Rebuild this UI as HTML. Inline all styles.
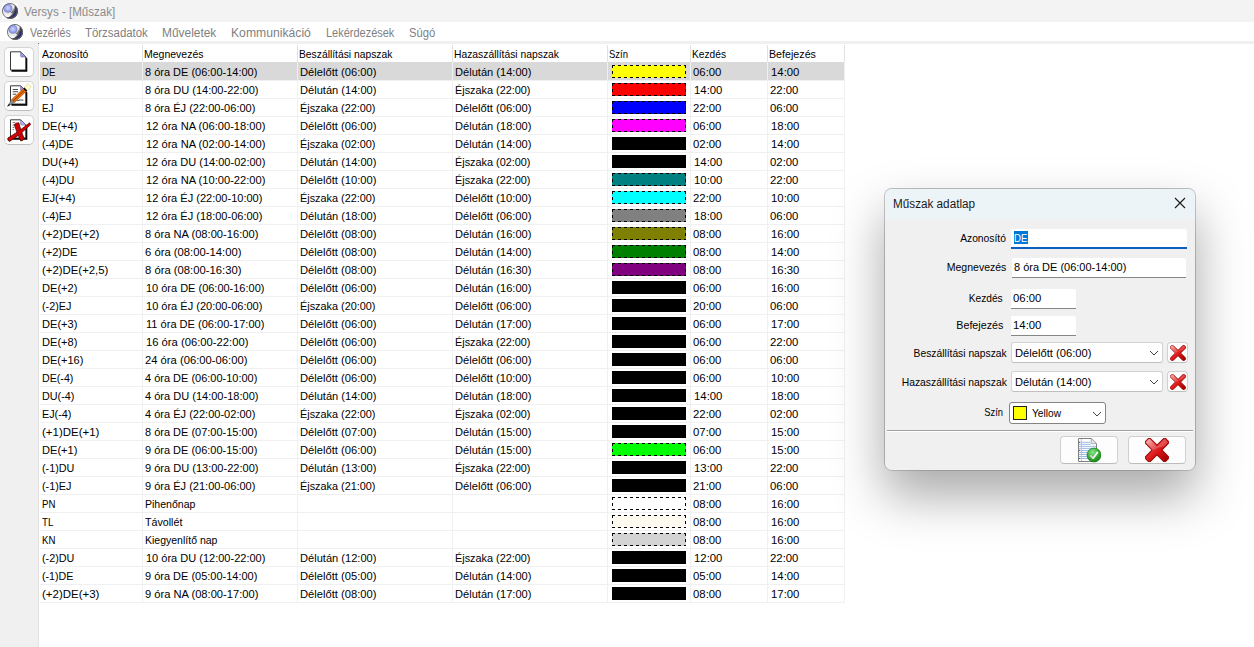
<!DOCTYPE html>
<html><head><meta charset="utf-8"><title>Versys</title>
<style>
*{box-sizing:border-box;margin:0;padding:0}
html,body{width:1254px;height:647px;overflow:hidden;background:#fff}
body{position:relative;font-family:"Liberation Sans",sans-serif;font-size:11px;color:#000}
.abs{position:absolute}
#title{left:0;top:0;width:1254px;height:22px;background:#f3f3f3}
#title .t{position:absolute;left:24px;top:4px;font-size:12px;color:#8b8b8b;white-space:nowrap;line-height:16px}
#menu{left:0;top:22px;width:1254px;height:19px;background:#fff}
#menu span{position:absolute;top:3px;font-size:12px;line-height:16px;color:#7f7f7f;white-space:nowrap}
#band{left:0;top:41px;width:1254px;height:3px;background:#f0f0f0}
#side{left:0;top:43px;width:38px;height:604px;background:#f0f0f0}
#sideline{left:38px;top:44px;width:1px;height:603px;background:#e3e3e3}
.tb{position:absolute;left:4px;width:30px;height:30px;border:1px solid #d4d4d4;border-bottom-color:#bdbdbd;border-radius:5px;background:#fdfdfd}
/* table */
#hdr{left:39px;top:44px;width:806px;height:18px;background:#fff}
#hdr span{position:absolute;top:1px;height:18px;line-height:19px;padding-left:3px;border-right:1px solid #e2e2e2;white-space:nowrap;font-size:11px}
.r{position:absolute;left:39px;width:806px;height:19px;border-bottom:1px solid #f0f0f0}
.r.sel{background:linear-gradient(90deg,#fff 0 1px,#d9d9d9 1px)}
.c{position:absolute;top:1px;height:17px;line-height:18px;white-space:nowrap;font-size:11px}
.c.n{margin-left:.5px}
.c0{left:3px}.c1{left:106px}.c2{left:260.5px}.c3{left:415.5px}.c5{left:654px}.c6{left:731.3px}
.sw{position:absolute;left:573px;top:3px;width:74px;height:13px}
.sw.d{background-image:
 repeating-linear-gradient(90deg,#000 0 3px,transparent 3px 6px),
 repeating-linear-gradient(90deg,#000 0 3px,transparent 3px 6px),
 repeating-linear-gradient(180deg,#000 0 3px,transparent 3px 6px),
 repeating-linear-gradient(180deg,#000 0 3px,transparent 3px 6px);
 background-size:100% 1px,100% 1px,1px 100%,1px 100%;
 background-position:0 0,0 100%,0 0,100% 0;background-repeat:no-repeat}
.vl{position:absolute;top:62px;width:1px;height:541px;background:#f0f0f0}
/* dialog */
#dlg{left:884px;top:188px;width:312px;height:283px;border-radius:8px;background:#f0f0f0;background-clip:padding-box;border:1px solid rgba(0,0,0,.2);border-top-color:rgba(0,0,0,.25);border-bottom-color:rgba(0,0,0,.14);
 box-shadow:0 25px 50px rgba(0,0,0,.34);overflow:hidden}
#dlg .in{position:absolute;left:0;top:-1px;width:310px;height:283px}
#dlg .cap{position:absolute;left:0;top:0;width:310px;height:31px;background:#ecf4f8}
#dlg .cap span{position:absolute;left:8px;top:8px;font-size:12px;line-height:16px;color:#1a1a1a;white-space:nowrap}
.lbl{position:absolute;text-align:right;white-space:nowrap;font-size:11px;line-height:14px}
.inp{position:absolute;background:#fff;border-bottom:1px solid #868686;border-radius:2px 2px 0 0;font-size:11px;line-height:14px;white-space:nowrap}
.inp span{position:absolute;left:1.5px;top:2px}
.inp span.n1{left:1.5px}
.inp.foc span{left:3px}
.cmb{position:absolute;background:#fff;border:1px solid #d2d2d2;border-bottom-color:#c0c0c0;border-radius:3px;font-size:11px;line-height:14px;white-space:nowrap}
.cmb span{position:absolute;left:2.5px;top:3px}
.xb{position:absolute;width:21px;height:21px;border:1px solid #d0d0d0;border-bottom-color:#bdbdbd;border-radius:4px;background:#fdfdfd}
.btn{position:absolute;width:58px;height:28px;border:1px solid #d0d0d0;border-bottom-color:#bdbdbd;border-radius:4px;background:#fdfdfd}

.inp.foc{border-bottom:2px solid #0a5fc0}
.hl{position:absolute;left:3px;top:2px;width:14px;height:13px;background:#0078d7}
.scmb{position:absolute;background:#fff;border:1px solid #848484;border-radius:3px;font-size:11px;line-height:14px;white-space:nowrap}
.scmb span{position:absolute;left:22px;top:3px}
.ybox{position:absolute;left:3px;top:3px;width:14px;height:14px;background:#ffff00;border:1px solid #222}
.s{display:inline-block;white-space:nowrap}
#menu span.s,#hdr span.s,#dlg .cap span.s,.cmb span.s,.inp span.s,.scmb span.s{position:static;border:0;padding:0;height:auto;line-height:inherit}
</style></head><body>
<div id="title" class="abs"><i class="abs" style="left:2px;top:3px;width:16px;height:16px;background:#fdfdfd"></i><svg class="abs" style="left:2px;top:3px" width="16" height="16" viewBox="0 0 16 16"><use href="#sph"/></svg><span class="t"><span class="s" style="transform:scaleX(0.963);transform-origin:0 0">Versys - [Műszak]</span></span></div>
<div id="menu" class="abs"><svg class="abs" style="left:7px;top:2px" width="16" height="16" viewBox="0 0 16 16"><use href="#sph"/></svg>
<span style="left:30px"><span class="s" style="transform:scaleX(0.884);transform-origin:0 0">Vezérlés</span></span><span style="left:85px"><span class="s" style="transform:scaleX(0.951);transform-origin:0 0">Törzsadatok</span></span><span style="left:162px"><span class="s" style="transform:scaleX(0.993);transform-origin:0 0">Műveletek</span></span><span style="left:231px"><span class="s" style="transform:scaleX(1.015);transform-origin:0 0">Kommunikáció</span></span><span style="left:326px"><span class="s" style="transform:scaleX(0.915);transform-origin:0 0">Lekérdezések</span></span><span style="left:409px"><span class="s" style="transform:scaleX(0.935);transform-origin:0 0">Súgó</span></span>
</div>
<div id="band" class="abs"></div>
<div id="side" class="abs"></div>
<div id="sideline" class="abs"></div><i class="abs" style="left:38px;top:43px;width:1px;height:1px;background:#777"></i>
<div class="tb" style="top:47px"></div>
<div class="tb" style="top:81px"></div>
<div class="tb" style="top:115px"></div>
<svg class="abs" style="left:0;top:44px" width="38" height="106" viewBox="0 44 38 106">
 <!-- new -->
 <g id="pg"><path d="M11.5 53 H21.5 L27.3 58.6 V71.7 H11.5Z" fill="#000"/><path d="M10.5 51.8 H20.6 L25.8 57 V70 H10.5Z" fill="#fefefe" stroke="#222" stroke-width=".9"/><path d="M20.6 51.8 L25.8 57 H21.6 Q20.6 57 20.6 56Z" fill="#9c9ce8" stroke="#55558a" stroke-width=".5"/></g>
 <!-- edit -->
 <g transform="translate(0,34)"><path d="M11.5 53 H21.5 L27.3 58.6 V71.7 H11.5Z" fill="#000"/><path d="M10.5 51.8 H20.6 L25.8 57 V70 H10.5Z" fill="#fefefe" stroke="#222" stroke-width=".9"/><path d="M20.6 51.8 L25.8 57 H21.6 Q20.6 57 20.6 56Z" fill="#9c9ce8" stroke="#55558a" stroke-width=".5"/>
  <path d="M12.8 55.5H18 M12.8 57.7H18 M12.8 60.2H16 M17 66.8 Q20 65.4 23.4 66.2" stroke="#333" stroke-width=".9" fill="none"/></g>
 <g>
  <path d="M7.5 106.3 L11.93 99.35 L14.69 102.25 Z" fill="#8e8e8e" stroke="#555" stroke-width=".5"/>
  <path d="M7.3 106.6 L9 103.9 L10.1 105.1Z" fill="#000"/>
  <path d="M11.93 99.35 L23.4 88.48 L26.16 91.38 L14.69 102.25Z" fill="#f07000" stroke="#8a3000" stroke-width=".5"/>
  <path d="M13.3 100.8 L24.78 89.93" stroke="#6a2000" stroke-width=".8"/>
  <path d="M23.4 88.48 L24.56 87.37 L27.32 90.27 L26.16 91.38Z" fill="#000"/>
  <path d="M24.29 87.08 L28.07 83.51 L31.37 86.99 L27.59 90.56Z" fill="#ffffc4" stroke="#c4c49a" stroke-width=".5"/>
 </g>
 <!-- delete -->
 <g transform="translate(0,68)"><path d="M11.5 53 H21.5 L27.3 58.6 V71.7 H11.5Z" fill="#000"/><path d="M10.5 51.8 H20.6 L25.8 57 V70 H10.5Z" fill="#fefefe" stroke="#222" stroke-width=".9"/><path d="M20.6 51.8 L25.8 57 H21.6 Q20.6 57 20.6 56Z" fill="#b4b4f0" stroke="#55558a" stroke-width=".5"/>
  <path d="M12.6 54.6H15.4 M12.6 57H15 M12.6 59.4H14.4 M12.6 61.6H14" stroke="#555" stroke-width=".8" fill="none"/></g>
 <g>
  <path d="M7.8 138 Q18 132.4 29.6 122.8 L30.6 124.6 Q20.4 135 9.6 141.4 Q7.2 140.8 7.8 138Z" fill="#c80000" stroke="#4a0000" stroke-width=".7"/>
  <path d="M14.3 124.6 Q16.4 122.4 18.8 122.8 Q20.6 130.6 24.2 138.4 Q23.2 141 20.8 141 Q16.6 132.8 14.3 124.6Z" fill="#cc0000" stroke="#4a0000" stroke-width=".7"/>
  <path d="M9 139.6 Q18.6 134 29.8 123.8" stroke="#d80000" stroke-width="1.4" fill="none"/>
 </g>
</svg>
<div id="hdr" class="abs">
<span style="left:0;width:104px"><span class="s" style="transform:scaleX(0.948);transform-origin:0 0">Azonosító</span></span><span style="left:104px;width:155px;padding-left:1.4px"><span class="s" style="transform:scaleX(0.954);transform-origin:0 0">Megnevezés</span></span><span style="left:259px;width:155px;padding-left:1.4px"><span class="s" style="transform:scaleX(0.937);transform-origin:0 0">Beszállítási napszak</span></span><span style="left:414px;width:155px;padding-left:1.4px"><span class="s" style="transform:scaleX(0.938);transform-origin:0 0">Hazaszállítási napszak</span></span><span style="left:569px;width:83px;padding-left:1.4px"><span class="s" style="transform:scaleX(0.859);transform-origin:0 0">Szín</span></span><span style="left:652px;width:77px;padding-left:1.4px"><span class="s" style="transform:scaleX(0.927);transform-origin:0 0">Kezdés</span></span><span style="left:729px;width:77px;padding-left:1.4px"><span class="s" style="transform:scaleX(0.971);transform-origin:0 0">Befejezés</span></span>
</div>
<div class="r sel" style="top:62px"><span class="c c0"><span class="s" style="transform:scaleX(0.877);transform-origin:0 0">DE</span></span><span class="c c1"><span class="s" style="transform:scaleX(0.999);transform-origin:0 0">8 óra DE (06:00-14:00)</span></span><span class="c c2"><span class="s" style="transform:scaleX(1.016);transform-origin:0 0">Délelőtt (06:00)</span></span><span class="c c3"><span class="s" style="transform:scaleX(1.008);transform-origin:0 0">Délután (14:00)</span></span><i class="sw d" style="background-color:#ffff00"></i><span class="c c5"><span class="s" style="transform:scaleX(1.032);transform-origin:0 0">06:00</span></span><span class="c c6 n"><span class="s" style="transform:scaleX(1.032);transform-origin:0 0">14:00</span></span></div>
<div class="r" style="top:80px"><span class="c c0"><span class="s" style="transform:scaleX(0.906);transform-origin:0 0">DU</span></span><span class="c c1"><span class="s" style="transform:scaleX(1.003);transform-origin:0 0">8 óra DU (14:00-22:00)</span></span><span class="c c2"><span class="s" style="transform:scaleX(1.008);transform-origin:0 0">Délután (14:00)</span></span><span class="c c3"><span class="s" style="transform:scaleX(0.987);transform-origin:0 0">Éjszaka (22:00)</span></span><i class="sw d" style="background-color:#ff0000"></i><span class="c c5 n"><span class="s" style="transform:scaleX(1.032);transform-origin:0 0">14:00</span></span><span class="c c6"><span class="s" style="transform:scaleX(1.032);transform-origin:0 0">22:00</span></span></div>
<div class="r" style="top:98px"><span class="c c0"><span class="s" style="transform:scaleX(0.888);transform-origin:0 0">EJ</span></span><span class="c c1"><span class="s" style="transform:scaleX(1.003);transform-origin:0 0">8 óra ÉJ (22:00-06:00)</span></span><span class="c c2"><span class="s" style="transform:scaleX(0.987);transform-origin:0 0">Éjszaka (22:00)</span></span><span class="c c3"><span class="s" style="transform:scaleX(1.016);transform-origin:0 0">Délelőtt (06:00)</span></span><i class="sw d" style="background-color:#0000ff"></i><span class="c c5"><span class="s" style="transform:scaleX(1.032);transform-origin:0 0">22:00</span></span><span class="c c6"><span class="s" style="transform:scaleX(1.032);transform-origin:0 0">06:00</span></span></div>
<div class="r" style="top:116px"><span class="c c0"><span class="s" style="transform:scaleX(1.007);transform-origin:0 0">DE(+4)</span></span><span class="c c1 n"><span class="s" style="transform:scaleX(1.012);transform-origin:0 0">12 óra NA (06:00-18:00)</span></span><span class="c c2"><span class="s" style="transform:scaleX(1.016);transform-origin:0 0">Délelőtt (06:00)</span></span><span class="c c3"><span class="s" style="transform:scaleX(1.008);transform-origin:0 0">Délután (18:00)</span></span><i class="sw d" style="background-color:#ff00ff"></i><span class="c c5"><span class="s" style="transform:scaleX(1.032);transform-origin:0 0">06:00</span></span><span class="c c6 n"><span class="s" style="transform:scaleX(1.032);transform-origin:0 0">18:00</span></span></div>
<div class="r" style="top:134px"><span class="c c0"><span class="s" style="transform:scaleX(0.969);transform-origin:0 0">(-4)DE</span></span><span class="c c1 n"><span class="s" style="transform:scaleX(1.012);transform-origin:0 0">12 óra NA (02:00-14:00)</span></span><span class="c c2"><span class="s" style="transform:scaleX(0.987);transform-origin:0 0">Éjszaka (02:00)</span></span><span class="c c3"><span class="s" style="transform:scaleX(1.008);transform-origin:0 0">Délután (14:00)</span></span><i class="sw" style="background-color:#000000"></i><span class="c c5"><span class="s" style="transform:scaleX(1.032);transform-origin:0 0">02:00</span></span><span class="c c6 n"><span class="s" style="transform:scaleX(1.032);transform-origin:0 0">14:00</span></span></div>
<div class="r" style="top:152px"><span class="c c0"><span class="s" style="transform:scaleX(1.018);transform-origin:0 0">DU(+4)</span></span><span class="c c1 n"><span class="s" style="transform:scaleX(1.001);transform-origin:0 0">12 óra DU (14:00-02:00)</span></span><span class="c c2"><span class="s" style="transform:scaleX(1.008);transform-origin:0 0">Délután (14:00)</span></span><span class="c c3"><span class="s" style="transform:scaleX(0.987);transform-origin:0 0">Éjszaka (02:00)</span></span><i class="sw" style="background-color:#000000"></i><span class="c c5 n"><span class="s" style="transform:scaleX(1.032);transform-origin:0 0">14:00</span></span><span class="c c6"><span class="s" style="transform:scaleX(1.032);transform-origin:0 0">02:00</span></span></div>
<div class="r" style="top:170px"><span class="c c0"><span class="s" style="transform:scaleX(0.982);transform-origin:0 0">(-4)DU</span></span><span class="c c1 n"><span class="s" style="transform:scaleX(1.012);transform-origin:0 0">12 óra NA (10:00-22:00)</span></span><span class="c c2"><span class="s" style="transform:scaleX(1.016);transform-origin:0 0">Délelőtt (10:00)</span></span><span class="c c3"><span class="s" style="transform:scaleX(0.987);transform-origin:0 0">Éjszaka (22:00)</span></span><i class="sw d" style="background-color:#008080"></i><span class="c c5 n"><span class="s" style="transform:scaleX(1.032);transform-origin:0 0">10:00</span></span><span class="c c6"><span class="s" style="transform:scaleX(1.032);transform-origin:0 0">22:00</span></span></div>
<div class="r" style="top:188px"><span class="c c0"><span class="s" style="transform:scaleX(1.021);transform-origin:0 0">EJ(+4)</span></span><span class="c c1 n"><span class="s" style="transform:scaleX(1.002);transform-origin:0 0">12 óra ÉJ (22:00-10:00)</span></span><span class="c c2"><span class="s" style="transform:scaleX(0.987);transform-origin:0 0">Éjszaka (22:00)</span></span><span class="c c3"><span class="s" style="transform:scaleX(1.016);transform-origin:0 0">Délelőtt (10:00)</span></span><i class="sw d" style="background-color:#00ffff"></i><span class="c c5"><span class="s" style="transform:scaleX(1.032);transform-origin:0 0">22:00</span></span><span class="c c6 n"><span class="s" style="transform:scaleX(1.032);transform-origin:0 0">10:00</span></span></div>
<div class="r" style="top:206px"><span class="c c0"><span class="s" style="transform:scaleX(0.982);transform-origin:0 0">(-4)EJ</span></span><span class="c c1 n"><span class="s" style="transform:scaleX(1.002);transform-origin:0 0">12 óra ÉJ (18:00-06:00)</span></span><span class="c c2"><span class="s" style="transform:scaleX(1.008);transform-origin:0 0">Délután (18:00)</span></span><span class="c c3"><span class="s" style="transform:scaleX(1.016);transform-origin:0 0">Délelőtt (06:00)</span></span><i class="sw d" style="background-color:#808080"></i><span class="c c5 n"><span class="s" style="transform:scaleX(1.032);transform-origin:0 0">18:00</span></span><span class="c c6"><span class="s" style="transform:scaleX(1.032);transform-origin:0 0">06:00</span></span></div>
<div class="r" style="top:224px"><span class="c c0"><span class="s" style="transform:scaleX(1.043);transform-origin:0 0">(+2)DE(+2)</span></span><span class="c c1"><span class="s" style="transform:scaleX(1.013);transform-origin:0 0">8 óra NA (08:00-16:00)</span></span><span class="c c2"><span class="s" style="transform:scaleX(1.016);transform-origin:0 0">Délelőtt (08:00)</span></span><span class="c c3"><span class="s" style="transform:scaleX(1.008);transform-origin:0 0">Délután (16:00)</span></span><i class="sw d" style="background-color:#808000"></i><span class="c c5"><span class="s" style="transform:scaleX(1.032);transform-origin:0 0">08:00</span></span><span class="c c6 n"><span class="s" style="transform:scaleX(1.032);transform-origin:0 0">16:00</span></span></div>
<div class="r" style="top:242px"><span class="c c0"><span class="s" style="transform:scaleX(1.007);transform-origin:0 0">(+2)DE</span></span><span class="c c1"><span class="s" style="transform:scaleX(1.024);transform-origin:0 0">6 óra (08:00-14:00)</span></span><span class="c c2"><span class="s" style="transform:scaleX(1.016);transform-origin:0 0">Délelőtt (08:00)</span></span><span class="c c3"><span class="s" style="transform:scaleX(1.008);transform-origin:0 0">Délután (14:00)</span></span><i class="sw d" style="background-color:#008000"></i><span class="c c5"><span class="s" style="transform:scaleX(1.032);transform-origin:0 0">08:00</span></span><span class="c c6 n"><span class="s" style="transform:scaleX(1.032);transform-origin:0 0">14:00</span></span></div>
<div class="r" style="top:260px"><span class="c c0"><span class="s" style="transform:scaleX(1.034);transform-origin:0 0">(+2)DE(+2,5)</span></span><span class="c c1"><span class="s" style="transform:scaleX(1.024);transform-origin:0 0">8 óra (08:00-16:30)</span></span><span class="c c2"><span class="s" style="transform:scaleX(1.016);transform-origin:0 0">Délelőtt (08:00)</span></span><span class="c c3"><span class="s" style="transform:scaleX(1.008);transform-origin:0 0">Délután (16:30)</span></span><i class="sw d" style="background-color:#800080"></i><span class="c c5"><span class="s" style="transform:scaleX(1.032);transform-origin:0 0">08:00</span></span><span class="c c6 n"><span class="s" style="transform:scaleX(1.032);transform-origin:0 0">16:30</span></span></div>
<div class="r" style="top:278px"><span class="c c0"><span class="s" style="transform:scaleX(1.007);transform-origin:0 0">DE(+2)</span></span><span class="c c1 n"><span class="s" style="transform:scaleX(0.998);transform-origin:0 0">10 óra DE (06:00-16:00)</span></span><span class="c c2"><span class="s" style="transform:scaleX(1.016);transform-origin:0 0">Délelőtt (06:00)</span></span><span class="c c3"><span class="s" style="transform:scaleX(1.008);transform-origin:0 0">Délután (16:00)</span></span><i class="sw" style="background-color:#000000"></i><span class="c c5"><span class="s" style="transform:scaleX(1.032);transform-origin:0 0">06:00</span></span><span class="c c6 n"><span class="s" style="transform:scaleX(1.032);transform-origin:0 0">16:00</span></span></div>
<div class="r" style="top:296px"><span class="c c0"><span class="s" style="transform:scaleX(0.982);transform-origin:0 0">(-2)EJ</span></span><span class="c c1 n"><span class="s" style="transform:scaleX(1.002);transform-origin:0 0">10 óra ÉJ (20:00-06:00)</span></span><span class="c c2"><span class="s" style="transform:scaleX(0.987);transform-origin:0 0">Éjszaka (20:00)</span></span><span class="c c3"><span class="s" style="transform:scaleX(1.016);transform-origin:0 0">Délelőtt (06:00)</span></span><i class="sw" style="background-color:#000000"></i><span class="c c5"><span class="s" style="transform:scaleX(1.032);transform-origin:0 0">20:00</span></span><span class="c c6"><span class="s" style="transform:scaleX(1.032);transform-origin:0 0">06:00</span></span></div>
<div class="r" style="top:314px"><span class="c c0"><span class="s" style="transform:scaleX(1.007);transform-origin:0 0">DE(+3)</span></span><span class="c c1 n"><span class="s" style="transform:scaleX(1.005);transform-origin:0 0">11 óra DE (06:00-17:00)</span></span><span class="c c2"><span class="s" style="transform:scaleX(1.016);transform-origin:0 0">Délelőtt (06:00)</span></span><span class="c c3"><span class="s" style="transform:scaleX(1.008);transform-origin:0 0">Délután (17:00)</span></span><i class="sw" style="background-color:#000000"></i><span class="c c5"><span class="s" style="transform:scaleX(1.032);transform-origin:0 0">06:00</span></span><span class="c c6 n"><span class="s" style="transform:scaleX(1.032);transform-origin:0 0">17:00</span></span></div>
<div class="r" style="top:332px"><span class="c c0"><span class="s" style="transform:scaleX(1.007);transform-origin:0 0">DE(+8)</span></span><span class="c c1 n"><span class="s" style="transform:scaleX(1.021);transform-origin:0 0">16 óra (06:00-22:00)</span></span><span class="c c2"><span class="s" style="transform:scaleX(1.016);transform-origin:0 0">Délelőtt (06:00)</span></span><span class="c c3"><span class="s" style="transform:scaleX(0.987);transform-origin:0 0">Éjszaka (22:00)</span></span><i class="sw" style="background-color:#000000"></i><span class="c c5"><span class="s" style="transform:scaleX(1.032);transform-origin:0 0">06:00</span></span><span class="c c6"><span class="s" style="transform:scaleX(1.032);transform-origin:0 0">22:00</span></span></div>
<div class="r" style="top:350px"><span class="c c0"><span class="s" style="transform:scaleX(1.003);transform-origin:0 0">DE(+16)</span></span><span class="c c1"><span class="s" style="transform:scaleX(1.021);transform-origin:0 0">24 óra (06:00-06:00)</span></span><span class="c c2"><span class="s" style="transform:scaleX(1.016);transform-origin:0 0">Délelőtt (06:00)</span></span><span class="c c3"><span class="s" style="transform:scaleX(1.016);transform-origin:0 0">Délelőtt (06:00)</span></span><i class="sw" style="background-color:#000000"></i><span class="c c5"><span class="s" style="transform:scaleX(1.032);transform-origin:0 0">06:00</span></span><span class="c c6"><span class="s" style="transform:scaleX(1.032);transform-origin:0 0">06:00</span></span></div>
<div class="r" style="top:368px"><span class="c c0"><span class="s" style="transform:scaleX(0.969);transform-origin:0 0">DE(-4)</span></span><span class="c c1"><span class="s" style="transform:scaleX(0.999);transform-origin:0 0">4 óra DE (06:00-10:00)</span></span><span class="c c2"><span class="s" style="transform:scaleX(1.016);transform-origin:0 0">Délelőtt (06:00)</span></span><span class="c c3"><span class="s" style="transform:scaleX(1.016);transform-origin:0 0">Délelőtt (10:00)</span></span><i class="sw" style="background-color:#000000"></i><span class="c c5"><span class="s" style="transform:scaleX(1.032);transform-origin:0 0">06:00</span></span><span class="c c6 n"><span class="s" style="transform:scaleX(1.032);transform-origin:0 0">10:00</span></span></div>
<div class="r" style="top:386px"><span class="c c0"><span class="s" style="transform:scaleX(0.982);transform-origin:0 0">DU(-4)</span></span><span class="c c1"><span class="s" style="transform:scaleX(1.003);transform-origin:0 0">4 óra DU (14:00-18:00)</span></span><span class="c c2"><span class="s" style="transform:scaleX(1.008);transform-origin:0 0">Délután (14:00)</span></span><span class="c c3"><span class="s" style="transform:scaleX(1.008);transform-origin:0 0">Délután (18:00)</span></span><i class="sw" style="background-color:#000000"></i><span class="c c5 n"><span class="s" style="transform:scaleX(1.032);transform-origin:0 0">14:00</span></span><span class="c c6 n"><span class="s" style="transform:scaleX(1.032);transform-origin:0 0">18:00</span></span></div>
<div class="r" style="top:404px"><span class="c c0"><span class="s" style="transform:scaleX(0.982);transform-origin:0 0">EJ(-4)</span></span><span class="c c1"><span class="s" style="transform:scaleX(1.003);transform-origin:0 0">4 óra ÉJ (22:00-02:00)</span></span><span class="c c2"><span class="s" style="transform:scaleX(0.987);transform-origin:0 0">Éjszaka (22:00)</span></span><span class="c c3"><span class="s" style="transform:scaleX(0.987);transform-origin:0 0">Éjszaka (02:00)</span></span><i class="sw" style="background-color:#000000"></i><span class="c c5"><span class="s" style="transform:scaleX(1.032);transform-origin:0 0">22:00</span></span><span class="c c6"><span class="s" style="transform:scaleX(1.032);transform-origin:0 0">02:00</span></span></div>
<div class="r" style="top:422px"><span class="c c0"><span class="s" style="transform:scaleX(1.043);transform-origin:0 0">(+1)DE(+1)</span></span><span class="c c1"><span class="s" style="transform:scaleX(0.999);transform-origin:0 0">8 óra DE (07:00-15:00)</span></span><span class="c c2"><span class="s" style="transform:scaleX(1.016);transform-origin:0 0">Délelőtt (07:00)</span></span><span class="c c3"><span class="s" style="transform:scaleX(1.008);transform-origin:0 0">Délután (15:00)</span></span><i class="sw" style="background-color:#000000"></i><span class="c c5"><span class="s" style="transform:scaleX(1.032);transform-origin:0 0">07:00</span></span><span class="c c6 n"><span class="s" style="transform:scaleX(1.032);transform-origin:0 0">15:00</span></span></div>
<div class="r" style="top:440px"><span class="c c0"><span class="s" style="transform:scaleX(1.007);transform-origin:0 0">DE(+1)</span></span><span class="c c1"><span class="s" style="transform:scaleX(0.999);transform-origin:0 0">9 óra DE (06:00-15:00)</span></span><span class="c c2"><span class="s" style="transform:scaleX(1.016);transform-origin:0 0">Délelőtt (06:00)</span></span><span class="c c3"><span class="s" style="transform:scaleX(1.008);transform-origin:0 0">Délután (15:00)</span></span><i class="sw d" style="background-color:#00ff00"></i><span class="c c5"><span class="s" style="transform:scaleX(1.032);transform-origin:0 0">06:00</span></span><span class="c c6 n"><span class="s" style="transform:scaleX(1.032);transform-origin:0 0">15:00</span></span></div>
<div class="r" style="top:458px"><span class="c c0"><span class="s" style="transform:scaleX(0.982);transform-origin:0 0">(-1)DU</span></span><span class="c c1"><span class="s" style="transform:scaleX(1.003);transform-origin:0 0">9 óra DU (13:00-22:00)</span></span><span class="c c2"><span class="s" style="transform:scaleX(1.008);transform-origin:0 0">Délután (13:00)</span></span><span class="c c3"><span class="s" style="transform:scaleX(0.987);transform-origin:0 0">Éjszaka (22:00)</span></span><i class="sw" style="background-color:#000000"></i><span class="c c5 n"><span class="s" style="transform:scaleX(1.032);transform-origin:0 0">13:00</span></span><span class="c c6"><span class="s" style="transform:scaleX(1.032);transform-origin:0 0">22:00</span></span></div>
<div class="r" style="top:476px"><span class="c c0"><span class="s" style="transform:scaleX(0.982);transform-origin:0 0">(-1)EJ</span></span><span class="c c1"><span class="s" style="transform:scaleX(1.003);transform-origin:0 0">9 óra ÉJ (21:00-06:00)</span></span><span class="c c2"><span class="s" style="transform:scaleX(0.987);transform-origin:0 0">Éjszaka (21:00)</span></span><span class="c c3"><span class="s" style="transform:scaleX(1.016);transform-origin:0 0">Délelőtt (06:00)</span></span><i class="sw" style="background-color:#000000"></i><span class="c c5"><span class="s" style="transform:scaleX(1.032);transform-origin:0 0">21:00</span></span><span class="c c6"><span class="s" style="transform:scaleX(1.032);transform-origin:0 0">06:00</span></span></div>
<div class="r" style="top:494px"><span class="c c0"><span class="s" style="transform:scaleX(0.877);transform-origin:0 0">PN</span></span><span class="c c1"><span class="s" style="transform:scaleX(0.958);transform-origin:0 0">Pihenőnap</span></span><span class="c c2"></span><span class="c c3"></span><i class="sw d" style="background-color:#ffffff"></i><span class="c c5"><span class="s" style="transform:scaleX(1.032);transform-origin:0 0">08:00</span></span><span class="c c6 n"><span class="s" style="transform:scaleX(1.032);transform-origin:0 0">16:00</span></span></div>
<div class="r" style="top:512px"><span class="c c0"><span class="s" style="transform:scaleX(0.888);transform-origin:0 0">TL</span></span><span class="c c1"><span class="s" style="transform:scaleX(0.971);transform-origin:0 0">Távollét</span></span><span class="c c2"></span><span class="c c3"></span><i class="sw d" style="background-color:#fffaf0"></i><span class="c c5"><span class="s" style="transform:scaleX(1.032);transform-origin:0 0">08:00</span></span><span class="c c6 n"><span class="s" style="transform:scaleX(1.032);transform-origin:0 0">16:00</span></span></div>
<div class="r" style="top:530px"><span class="c c0"><span class="s" style="transform:scaleX(0.877);transform-origin:0 0">KN</span></span><span class="c c1"><span class="s" style="transform:scaleX(0.955);transform-origin:0 0">Kiegyenlítő nap</span></span><span class="c c2"></span><span class="c c3"></span><i class="sw d" style="background-color:#d3d3d3"></i><span class="c c5"><span class="s" style="transform:scaleX(1.032);transform-origin:0 0">08:00</span></span><span class="c c6 n"><span class="s" style="transform:scaleX(1.032);transform-origin:0 0">16:00</span></span></div>
<div class="r" style="top:548px"><span class="c c0"><span class="s" style="transform:scaleX(0.982);transform-origin:0 0">(-2)DU</span></span><span class="c c1 n"><span class="s" style="transform:scaleX(1.001);transform-origin:0 0">10 óra DU (12:00-22:00)</span></span><span class="c c2"><span class="s" style="transform:scaleX(1.008);transform-origin:0 0">Délután (12:00)</span></span><span class="c c3"><span class="s" style="transform:scaleX(0.987);transform-origin:0 0">Éjszaka (22:00)</span></span><i class="sw" style="background-color:#000000"></i><span class="c c5 n"><span class="s" style="transform:scaleX(1.032);transform-origin:0 0">12:00</span></span><span class="c c6"><span class="s" style="transform:scaleX(1.032);transform-origin:0 0">22:00</span></span></div>
<div class="r" style="top:566px"><span class="c c0"><span class="s" style="transform:scaleX(0.969);transform-origin:0 0">(-1)DE</span></span><span class="c c1"><span class="s" style="transform:scaleX(0.999);transform-origin:0 0">9 óra DE (05:00-14:00)</span></span><span class="c c2"><span class="s" style="transform:scaleX(1.016);transform-origin:0 0">Délelőtt (05:00)</span></span><span class="c c3"><span class="s" style="transform:scaleX(1.008);transform-origin:0 0">Délután (14:00)</span></span><i class="sw" style="background-color:#000000"></i><span class="c c5"><span class="s" style="transform:scaleX(1.032);transform-origin:0 0">05:00</span></span><span class="c c6 n"><span class="s" style="transform:scaleX(1.032);transform-origin:0 0">14:00</span></span></div>
<div class="r" style="top:584px"><span class="c c0"><span class="s" style="transform:scaleX(1.043);transform-origin:0 0">(+2)DE(+3)</span></span><span class="c c1"><span class="s" style="transform:scaleX(1.013);transform-origin:0 0">9 óra NA (08:00-17:00)</span></span><span class="c c2"><span class="s" style="transform:scaleX(1.016);transform-origin:0 0">Délelőtt (08:00)</span></span><span class="c c3"><span class="s" style="transform:scaleX(1.008);transform-origin:0 0">Délután (17:00)</span></span><i class="sw" style="background-color:#000000"></i><span class="c c5"><span class="s" style="transform:scaleX(1.032);transform-origin:0 0">08:00</span></span><span class="c c6 n"><span class="s" style="transform:scaleX(1.032);transform-origin:0 0">17:00</span></span></div>
<i class="abs" style="left:39px;top:62px;width:1px;height:542px;background:#fff"></i><i class="vl" style="left:142px"></i><i class="vl" style="left:297px"></i><i class="vl" style="left:452px"></i><i class="vl" style="left:607px"></i><i class="vl" style="left:690px"></i><i class="vl" style="left:767px"></i><i class="vl" style="left:844px"></i>
<div id="dlg" class="abs"><div class="in">
 <div class="cap"><span><span class="s" style="transform:scaleX(0.976);transform-origin:0 0">Műszak adatlap</span></span>
  <svg class="abs" style="left:289px;top:9px" width="12" height="12" viewBox="0 0 12 12"><path d="M1 1 L11 11 M11 1 L1 11" stroke="#1a1a1a" stroke-width="1.1" fill="none"/></svg>
 </div>
 <div class="lbl" style="right:189px;top:43px"><span class="s" style="transform:scaleX(0.936);transform-origin:100% 0">Azonosító</span></div>
 <div class="lbl" style="right:189px;top:72px"><span class="s" style="transform:scaleX(0.956);transform-origin:100% 0">Megnevezés</span></div>
 <div class="lbl" style="right:192px;top:103px"><span class="s" style="transform:scaleX(0.927);transform-origin:100% 0">Kezdés</span></div>
 <div class="lbl" style="right:192px;top:130px"><span class="s" style="transform:scaleX(0.973);transform-origin:100% 0">Befejezés</span></div>
 <div class="lbl" style="right:188.5px;top:158px"><span class="s" style="transform:scaleX(0.934);transform-origin:100% 0">Beszállítási napszak</span></div>
 <div class="lbl" style="right:188.5px;top:187px"><span class="s" style="transform:scaleX(0.940);transform-origin:100% 0">Hazaszállítási napszak</span></div>
 <div class="lbl" style="right:192px;top:217px"><span class="s" style="transform:scaleX(0.850);transform-origin:100% 0">Szín</span></div>
 <div class="inp foc" style="left:126px;top:41px;width:176px;height:20px"><b class="hl"></b><span style="color:#fff"><span class="s" style="transform:scaleX(0.877);transform-origin:0 0">DE</span></span></div>
 <div class="inp" style="left:127px;top:70px;width:174px;height:20px"><span><span class="s" style="transform:scaleX(0.999);transform-origin:0 0">8 óra DE (06:00-14:00)</span></span></div>
 <div class="inp" style="left:126px;top:101px;width:65px;height:20px"><span><span class="s" style="transform:scaleX(1.032);transform-origin:0 0">06:00</span></span></div>
 <div class="inp" style="left:126px;top:128px;width:65px;height:20px"><span class="n1"><span class="s" style="transform:scaleX(1.032);transform-origin:0 0">14:00</span></span></div>
 <div class="cmb" style="left:126px;top:154px;width:152px;height:21px"><span><span class="s" style="transform:scaleX(1.016);transform-origin:0 0">Délelőtt (06:00)</span></span>
  <svg class="abs chev" style="left:137px;top:7px" width="10" height="6" viewBox="0 0 10 6"><path d="M1 1 L5 5 L9 1" stroke="#444" stroke-width="1" fill="none"/></svg></div>
 <div class="cmb" style="left:126px;top:183px;width:152px;height:21px"><span><span class="s" style="transform:scaleX(1.008);transform-origin:0 0">Délután (14:00)</span></span>
  <svg class="abs chev" style="left:137px;top:7px" width="10" height="6" viewBox="0 0 10 6"><path d="M1 1 L5 5 L9 1" stroke="#444" stroke-width="1" fill="none"/></svg></div>
 <div class="xb" style="left:282px;top:154px"><svg class="abs" style="left:2px;top:2px" width="16" height="16" viewBox="1 1 22 22"><use href="#redxs"/></svg></div>
 <div class="xb" style="left:282px;top:183px"><svg class="abs" style="left:2px;top:2px" width="16" height="16" viewBox="1 1 22 22"><use href="#redxs"/></svg></div>
 <div class="scmb" style="left:124px;top:214px;width:97px;height:22px"><i class="ybox"></i><span><span class="s" style="transform:scaleX(0.927);transform-origin:0 0">Yellow</span></span>
  <svg class="abs" style="left:82.2px;top:8px" width="10" height="6" viewBox="0 0 10 6"><path d="M1 1 L5 5 L9 1" stroke="#444" stroke-width="1" fill="none"/></svg></div>
 <div class="abs" style="left:2px;top:242px;width:306px;height:1px;background:#a0a0a0"></div>
 <div class="abs" style="left:2px;top:243px;width:306px;height:1px;background:#fff"></div>
 <div class="btn" style="left:175px;top:248px">
  <svg class="abs" style="left:16px;top:1px" width="24" height="25" viewBox="0 0 24 25">
   <defs><linearGradient id="ckg" gradientUnits="userSpaceOnUse" x1="13" y1="0" x2="21" y2="0"><stop offset="0" stop-color="#c4c4c4"/><stop offset="0.55" stop-color="#ececec"/><stop offset="1" stop-color="#ffffff"/></linearGradient><radialGradient id="gg" cx="0.4" cy="0.3" r="0.8"><stop offset="0" stop-color="#8ae68a"/><stop offset="0.55" stop-color="#30aa30"/><stop offset="1" stop-color="#128012"/></radialGradient></defs>
   <path d="M1.5 0.5 H14.3 L19.5 5.7 V23.5 H1.5 Z" fill="#fff" stroke="#808080" stroke-width="1"/>
   <path d="M14.3 0.5 V5.7 H19.5 Z" fill="#ececec" stroke="#9a9a9a" stroke-width=".8"/>
   <path d="M2 4.30H13.5 M2 6.33H13.5 M2 8.36H19 M2 10.39H19 M2 12.42H19 M2 14.45H19 M2 16.48H19 M2 18.51H19 M2 20.54H19" stroke="#9cbce8" stroke-width="1"/>
   <path d="M4.4 1 V23" stroke="#e8b49c" stroke-width="1"/>
   <path d="M2 4.3h1 M2 12.4h1 M2 20.5h1" stroke="#555" stroke-width="1"/>
   <circle cx="17" cy="17" r="7" fill="url(#gg)" stroke="#0e6e0e" stroke-width=".6"/>
   <path d="M13.5 17.8 L16.2 20.3 L20.4 14.4" stroke="url(#ckg)" stroke-width="1.9" fill="none" stroke-linecap="round" stroke-linejoin="round"/>
  </svg></div>
 <div class="btn" style="left:243px;top:248px"><svg class="abs" style="left:16px;top:1px" width="24" height="24" viewBox="1 1 22 22"><use href="#redx"/></svg></div>
</div></div>
<svg width="0" height="0" style="position:absolute"><defs>
 <radialGradient id="spb" cx="0.5" cy="0.48" r="0.5"><stop offset="0" stop-color="#e8c8ff"/><stop offset="0.2" stop-color="#d0c0ff"/><stop offset="0.5" stop-color="#98b8f2"/><stop offset="0.8" stop-color="#9494e0"/><stop offset="1" stop-color="#8080c4"/></radialGradient>
 <linearGradient id="spw" x1="0" y1="0" x2="1" y2="1"><stop offset="0" stop-color="#ffffff"/><stop offset="1" stop-color="#c4c4c4"/></linearGradient>
 <g id="sph">
  <circle cx="8" cy="8" r="7.7" fill="#ebebeb"/>
  <path d="M0.6 8.6 Q1.6 12.4 5.4 12.6 Q9 12.4 10.6 10 Q9.6 13.4 6 14.4 Q2 13.8 0.6 8.6Z" fill="#fafafa"/>
  <path d="M8.4 9.6 Q11 8.4 11.2 5.2 Q12.6 7.6 11.8 10 Q10.4 12.6 7 13.4 Q9.6 12.2 10.4 10.2 Q9.6 10.6 8.4 9.6Z" fill="#77777a"/>
  <path d="M12.9 2 A7.7 7.7 0 0 1 3.9 14.5 Q8.2 14 10.4 11.4 Q12.6 8.8 12.4 5.2 Q12.8 3.6 12.9 2Z" fill="#46464c"/>
  <path d="M14.2 5 Q15.3 8.4 13.9 11.2 Q11.8 14.4 7.4 15 Q10.6 13.6 12.2 11 Q13.8 8.4 14.2 5Z" fill="#2a2a86"/>
  <circle cx="5.9" cy="5.2" r="4.5" fill="url(#spb)"/>
  <circle cx="8" cy="8" r="7.55" fill="none" stroke="#66666a" stroke-width=".9"/>
 </g>
 <linearGradient id="rxg" gradientUnits="userSpaceOnUse" x1="2" y1="2" x2="21" y2="22"><stop offset="0" stop-color="#f6a8a8"/><stop offset="0.38" stop-color="#e63232"/><stop offset="0.6" stop-color="#d81414"/><stop offset="1" stop-color="#a00000"/></linearGradient>
 <g id="redx"><path d="M3.80 1.80 Q5.0 0.6 6.20 1.80 L12 7.6 L17.80 1.80 Q19 0.6 20.20 1.80 L22.20 3.80 Q23.4 5.0 22.20 6.20 L16.4 12 L22.20 17.80 Q23.4 19 22.20 20.20 L20.20 22.20 Q19 23.4 17.80 22.20 L12 16.4 L6.20 22.20 Q5 23.4 3.80 22.20 L1.80 20.20 Q0.6 19 1.80 17.80 L7.6 12 L1.80 6.20 Q0.6 5.0 1.80 3.80Z" fill="url(#rxg)" stroke="#a30d0d" stroke-width="1" stroke-linejoin="round"/><path d="M5 2 L12 9 L19 2 L22 5 L18.4 8.6 Q12 9.6 6.2 13.4 L7.6 12 L2 5 Z" fill="#fff" opacity=".2"/></g>
 <g id="redxs"><path d="M3.22 1.66 Q4.28 0.60 5.34 1.66 L12.00 8.32 L18.66 1.66 Q19.72 0.60 20.78 1.66 L22.34 3.22 Q23.40 4.28 22.34 5.34 L15.68 12.00 L22.34 18.66 Q23.40 19.72 22.34 20.78 L20.78 22.34 Q19.72 23.40 18.66 22.34 L12.00 15.68 L5.34 22.34 Q4.28 23.40 3.22 22.34 L1.66 20.78 Q0.60 19.72 1.66 18.66 L8.32 12.00 L1.66 5.34 Q0.60 4.28 1.66 3.22Z" fill="url(#rxg)" stroke="#980808" stroke-width="1.1" stroke-linejoin="round"/><path d="M4.3 2 L12 9.6 L19.7 2 L22 4.3 L18.6 7.8 Q12 9.2 5.8 13.6 L8.3 12 L2 4.3 Z" fill="#fff" opacity=".18"/></g>
</defs></svg>
</body></html>
